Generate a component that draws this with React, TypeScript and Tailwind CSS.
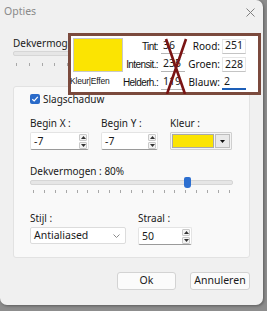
import React from "react";

const ticks = Array.from({ length: 19 }, (_, i) => i);

const Spin = () => (
  <div className="flex flex-col gap-[1px] pr-[1px]">
    <span className="flex h-[7px] w-[8px] items-center justify-center rounded-[1px] border border-[#c9c9c9] bg-[#f3f3f3]">
      <svg width="5" height="3" viewBox="0 0 5 3">
        <path d="M0 3 L2.5 0 L5 3Z" fill="#333" />
      </svg>
    </span>
    <span className="flex h-[7px] w-[8px] items-center justify-center rounded-[1px] border border-[#c9c9c9] bg-[#f3f3f3]">
      <svg width="5" height="3" viewBox="0 0 5 3">
        <path d="M0 0 L2.5 3 L5 0Z" fill="#333" />
      </svg>
    </span>
  </div>
);

const SpinField = ({ value, width }: { value: string; width: string }) => (
  <div
    className={`flex h-[18px] ${width} items-center justify-between rounded-[2px] border border-[#e4e4e4] border-b-[#9a9a9a] bg-white pl-[3px]`}>
    <span className="text-[10.5px] leading-none text-[#1a1a1a]">{value}</span>
    <Spin />
  </div>
);

const Ticks = () => (
  <div className="flex justify-between px-[3px]">
    {ticks.map((t) => (
      <span key={t} className="h-[3px] w-[1px] bg-[#a8a8a8]" />
    ))}
  </div>
);

const BoxRow = ({
  label,
  value,
  label2,
  value2,
  focus,
}: {
  label: string;
  value: string;
  label2: string;
  value2: string;
  focus?: boolean;
}) => (
  <div className="flex h-[19px] items-center">
    <span className="w-[35px] whitespace-nowrap text-right font-['Liberation_Sans',sans-serif] text-[10px] tracking-[-0.6px] text-[#111]">
      {label}
    </span>
    <div className="ml-[3px] flex h-[15px] w-[24px] items-center border-b border-[#b5b5b5] bg-white pl-[2px] text-[10.5px] text-[#1a1a1a]">
      {value}
    </div>
    <span className="w-[35px] text-right text-[10px] text-[#111]">{label2}</span>
    <div
      className={`ml-[2px] flex h-[15px] w-[24px] items-center bg-white pl-[2px] text-[10.5px] text-[#1a1a1a] ${
        focus ? "border-b-2 border-[#1d5fb8]" : "border border-[#e6e6e6] border-b-[#c4c4c4]"
      }`}>
      {value2}
    </div>
  </div>
);

const App = () => {
  return (
    <div className="h-[311px] w-[267px] overflow-hidden bg-[#8d8d8d] font-['Noto_Sans',sans-serif]">
      <div className="relative flex h-[305px] w-[263px] flex-col rounded-b-[7px] rounded-tr-[7px] bg-[#f0f0f0] shadow-[1px_1px_3px_rgba(0,0,0,0.35)]">
        {/* title bar */}
        <div className="flex h-[24px] items-center justify-between pl-[4px] pr-[8px]">
          <span className="text-[10.5px] text-[#8a8a8a]">Opties</span>
          <svg width="9" height="9" viewBox="0 0 9 9">
            <path d="M0.5 0.5 L8.5 8.5 M8.5 0.5 L0.5 8.5" stroke="#808080" strokeWidth="1" />
          </svg>
        </div>

        {/* top opacity slider, mostly covered */}
        <div className="px-[13px]">
          <p className="mt-[12px] text-[10px] leading-[14px] text-[#1a1a1a]">Dekvermogen</p>
          <div className="mt-[1px] h-[5px] rounded-[2px] border border-[#d6d6d6] bg-[#e6e6e6]" />
          <div className="mt-[7px]">
            <Ticks />
          </div>
        </div>

        {/* shadow panel */}
        <div className="mx-[13px] mt-[20px] h-[172px] rounded-[3px] border border-[#e2e2e2] bg-[#f9f9f9] pl-[16px] pr-[16px] pt-[6px]">
          <div className="flex h-[12px] items-center gap-[3px]">
            <span className="flex h-[10px] w-[10px] items-center justify-center rounded-[2px] bg-[#2a6bc9]">
              <svg width="8" height="8" viewBox="0 0 8 8">
                <path d="M1.3 4.2 L3.2 6 L6.8 1.8" stroke="#fff" strokeWidth="1.2" fill="none" />
              </svg>
            </span>
            <span className="text-[10px] text-[#1a1a1a]">Slagschaduw</span>
          </div>

          <div className="mt-[11px] flex gap-[12px]">
            <div className="flex w-[59px] flex-col gap-[2px]">
              <span className="text-[10px] leading-[14px] text-[#1a1a1a]">Begin X :</span>
              <SpinField value="-7" width="w-[59px]" />
            </div>
            <div className="flex w-[57px] flex-col gap-[2px]">
              <span className="text-[10px] leading-[14px] text-[#1a1a1a]">Begin Y :</span>
              <SpinField value="-7" width="w-[57px]" />
            </div>
            <div className="flex w-[62px] flex-col gap-[2px]">
              <span className="text-[10px] leading-[14px] text-[#1a1a1a]">Kleur :</span>
              <div className="flex h-[18px] items-center gap-[1px] rounded-[1px] border border-[#cfcfcf] bg-[#f4f4f4] p-[1px]">
                <span className="h-full flex-1 border border-[#a9a9a9] bg-[#fbe402]" />
                <span className="flex h-full w-[15px] items-center justify-center border border-[#bdbdbd] bg-[#e9e9e9]">
                  <svg width="5" height="3" viewBox="0 0 5 3">
                    <path d="M0 0 L2.5 3 L5 0Z" fill="#111" />
                  </svg>
                </span>
              </div>
            </div>
          </div>

          <p className="mt-[14px] text-[10px] leading-[14px] text-[#1a1a1a]">Dekvermogen : 80%</p>
          <div className="relative mt-[2px] w-[203px]">
            <div className="h-[5px] rounded-[2px] border border-[#d6d6d6] bg-[#e6e6e6]" />
            <span className="absolute left-[154px] top-[-3px] h-[11px] w-[7px] rounded-[2px] rounded-b-[3px] bg-[#2d6fd0]" />
            <div className="mt-[5px]">
              <Ticks />
            </div>
          </div>

          <div className="mt-[18px] flex gap-[12px]">
            <div className="flex w-[96px] flex-col gap-[2px]">
              <span className="text-[10px] leading-[14px] text-[#1a1a1a]">Stijl :</span>
              <div className="flex h-[17px] items-center justify-between rounded-[2px] border border-[#dcdcdc] bg-white pl-[3px] pr-[5px]">
                <span className="text-[10.5px] leading-none text-[#1a1a1a]">Antialiased</span>
                <svg width="7" height="4" viewBox="0 0 7 4">
                  <path d="M0.5 0.5 L3.5 3.5 L6.5 0.5" stroke="#8a8a8a" fill="none" />
                </svg>
              </div>
            </div>
            <div className="flex w-[54px] flex-col gap-[2px]">
              <span className="text-[10px] leading-[14px] text-[#1a1a1a]">Straal :</span>
              <SpinField value="50" width="w-[54px]" />
            </div>
          </div>
        </div>

        {/* buttons */}
        <div className="mt-[14px] flex justify-end gap-[14px] pr-[13px]">
          <button className="h-[18px] w-[59px] rounded-[3px] border border-[#d3d3d3] bg-[#fbfbfb] text-[10.5px] text-[#1a1a1a]">
            Ok
          </button>
          <button className="h-[18px] w-[60px] rounded-[3px] border border-[#d3d3d3] bg-[#fbfbfb] text-[10.5px] text-[#1a1a1a]">
            Annuleren
          </button>
        </div>

        {/* pasted colour info box */}
        <div className="absolute left-[68px] top-[33px] flex h-[62px] w-[193px] border-[3px] border-[#7b4a3d] bg-white">
          <div className="flex w-[52px] flex-col">
            <span className="ml-[2px] mt-[2px] h-[34px] w-[50px] border border-[#c8c8c8] bg-[#fbe402]" />
            <span className="-ml-[1px] mt-[4px] whitespace-nowrap font-['Liberation_Sans',sans-serif] text-[8.5px] leading-[10px] tracking-[-0.2px] text-[#1a1a1a]">
              Kleur|Effen
            </span>
          </div>
          <div className="flex flex-col pt-[1px]">
            <BoxRow label="Tint:" value="36" label2="Rood:" value2="251" />
            <BoxRow label="Intensit.:" value="235" label2="Groen:" value2="228" />
            <BoxRow label="Helderh.:" value="119" label2="Blauw:" value2="2" focus />
          </div>
          <svg className="absolute left-[92px] top-[2px]" width="26" height="56" viewBox="0 0 26 56">
            <path d="M3 1 L22 56 M23 1 L4 56" stroke="#7a1414" strokeWidth="2.6" />
          </svg>
        </div>
      </div>
    </div>
  );
};

export default App;
